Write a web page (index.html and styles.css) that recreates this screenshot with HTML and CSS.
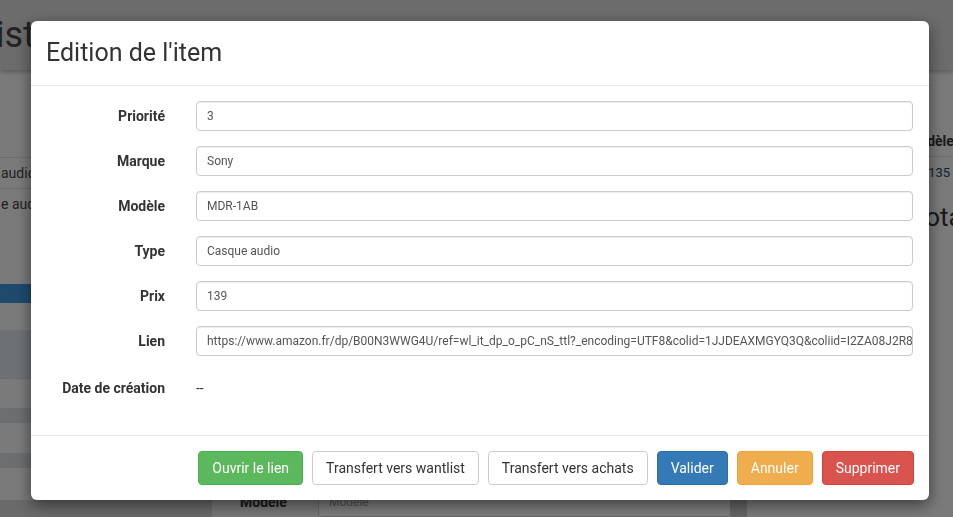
FILE: index.html
```html
<!DOCTYPE html>
<html lang="fr">
<head>
<meta charset="utf-8">
<title>Edition de l'item</title>
<link rel="stylesheet" href="styles.css">
</head>
<body>
<div class="page">
  <header class="navbar">
    <span class="brand">Wishlist</span>
  </header>
  <main class="content">
    <section class="col-left">
      <div class="left-top"></div>
      <div class="trow">audio</div>
      <div class="trow">e audio</div>
      <div class="left-gap"></div>
      <div class="blue-bar"></div>
      <div class="lite h27"></div>
      <div class="tint h48"></div>
      <div class="lite h30 bt"></div>
      <div class="strip"></div>
      <div class="lite h30"></div>
      <div class="strip"></div>
      <div class="lite h32"></div>
      <div class="left-foot"></div>
    </section>
    <section class="col-mid">
      <div class="mid-row">
        <span class="mid-label">Modèle</span>
        <span class="mid-input">Modèle</span>
      </div>
    </section>
    <div class="col-gap"></div>
    <section class="col-right">
      <div class="rt-head"><span class="rt-cell">Modèle</span></div>
      <div class="rt-row"><span class="rt-cell rt-val">XB135</span></div>
      <h3 class="rt-total">Total</h3>
    </section>
  </main>
</div>

<div class="backdrop"></div>

<div class="modal-layer">
  <div class="modal">
    <div class="modal-header">
      <h4 class="modal-title">Edition de l'item</h4>
    </div>
    <div class="modal-body">
      <div class="form-row">
        <label class="form-label">Priorité</label>
        <div class="form-input">3</div>
      </div>
      <div class="form-row">
        <label class="form-label">Marque</label>
        <div class="form-input">Sony</div>
      </div>
      <div class="form-row">
        <label class="form-label">Modèle</label>
        <div class="form-input">MDR-1AB</div>
      </div>
      <div class="form-row">
        <label class="form-label">Type</label>
        <div class="form-input">Casque audio</div>
      </div>
      <div class="form-row">
        <label class="form-label">Prix</label>
        <div class="form-input">139</div>
      </div>
      <div class="form-row">
        <label class="form-label">Lien</label>
        <div class="form-input">https://www.amazon.fr/dp/B00N3WWG4U/ref=wl_it_dp_o_pC_nS_ttl?_encoding=UTF8&amp;colid=1JJDEAXMGYQ3Q&amp;coliid=I2ZA08J2R8ZZZ</div>
      </div>
      <div class="form-row static">
        <label class="form-label">Date de création</label>
        <div class="form-static">--</div>
      </div>
    </div>
    <div class="modal-footer">
      <button class="btn btn-success">Ouvrir le lien</button>
      <button class="btn btn-default">Transfert vers wantlist</button>
      <button class="btn btn-default">Transfert vers achats</button>
      <button class="btn btn-primary">Valider</button>
      <button class="btn btn-warning">Annuler</button>
      <button class="btn btn-danger">Supprimer</button>
    </div>
  </div>
</div>
</body>
</html>
```

FILE: styles.css
```css
* { box-sizing: border-box; }

html, body {
  margin: 0;
  padding: 0;
  height: 100%;
  overflow: hidden;
}

body {
  font-family: Roboto, "Liberation Sans", sans-serif;
  font-size: 14px;
  color: #333;
  background: #f4f4f4;
}

/* ---------- page behind the modal ---------- */
.page {
  width: 953px;
  height: 517px;
  overflow: hidden;
}

.navbar {
  height: 70px;
  background: #d8d8d8;
  box-shadow: 0 2px 4px rgba(0, 0, 0, 0.25);
  display: flex;
  align-items: center;
  position: relative;
  z-index: 1;
}

.brand {
  font-size: 36px;
  color: #444;
  margin-left: -92px;
  line-height: 42px;
}

.content {
  display: grid;
  grid-template-columns: 212px 519px 16px 1fr;
  height: 447px;
}

.col-left {
  display: flex;
  flex-direction: column;
  background: #f4f4f4;
}

.left-top { height: 87px; }

.trow {
  height: 31px;
  border-top: 1px solid #dcdcdc;
  line-height: 30px;
  padding-left: 1px;
  color: #444;
}

.left-gap { height: 65px; }
.blue-bar { height: 19px; background: #3d94dc; }
.lite { background: #f4f4f4; }
.tint { background: #dbe2ea; }
.bt { border-top: 1px solid #d6d6d6; }
.h27 { height: 27px; }
.h48 { height: 48px; }
.h30 { height: 30px; }
.h32 { height: 32px; }
.strip { height: 15px; background: #d8dce0; }
.left-foot { flex: 1; background: #d4d4d4; }

.col-mid {
  background: #efefef;
  padding-top: 417px;
}

.mid-row {
  display: flex;
  align-items: center;
  height: 30px;
}

.mid-label {
  width: 106px;
  padding-left: 28px;
  font-weight: bold;
  color: #333;
}

.mid-input {
  flex: 1;
  height: 30px;
  line-height: 28px;
  border: 1px solid #ccc;
  border-radius: 4px;
  background: #fafafa;
  padding-left: 10px;
  font-size: 12px;
  color: #999;
}

.col-gap { background: #cacaca; }

.col-right {
  background: #f4f4f4;
  padding-top: 55px;
  padding-left: 159px;
}

.rt-head, .rt-row {
  height: 31px;
  display: flex;
  align-items: center;
}

.rt-head {
  font-weight: bold;
  border-bottom: 1px solid #ddd;
  height: 32px;
  padding-left: 1px;
}

.rt-row { padding-left: 6px; }

.rt-val { color: #2a4460; font-size: 13px; }

.rt-total {
  margin: 14px 0 0 5px;
  font-size: 26px;
  font-weight: normal;
  color: #333;
}

/* ---------- overlay ---------- */
.backdrop {
  position: fixed;
  inset: 0;
  background: rgba(0, 0, 0, 0.5);
  z-index: 10;
}

.modal-layer {
  position: fixed;
  inset: 0;
  z-index: 20;
}

.modal {
  width: 898px;
  margin: 21px 0 0 31px;
  background: #fff;
  border-radius: 6px;
  box-shadow: 0 5px 15px rgba(0, 0, 0, 0.5);
}

.modal-header {
  padding: 15px;
  border-bottom: 1px solid #e5e5e5;
}

.modal-title {
  margin: 0;
  font-size: 25px;
  line-height: 34px;
  font-weight: normal;
  color: #333;
}

.modal-body {
  padding: 15px 16px 30px 15px;
  display: flex;
  flex-direction: column;
  gap: 15px;
}

.form-row {
  display: grid;
  grid-template-columns: 119px 1fr;
  column-gap: 31px;
  align-items: center;
  height: 30px;
}

.form-row.static { height: 34px; }

.form-label {
  text-align: right;
  font-weight: bold;
  color: #333;
  white-space: nowrap;
}

.form-input {
  height: 30px;
  line-height: 28px;
  border: 1px solid #ccc;
  border-radius: 4px;
  box-shadow: inset 0 1px 1px rgba(0, 0, 0, 0.075);
  padding: 0 10px;
  font-size: 12px;
  color: #555;
  white-space: nowrap;
  overflow: hidden;
}

.form-static {
  color: #333;
}

.modal-footer {
  border-top: 1px solid #e5e5e5;
  padding: 15px;
  display: flex;
  justify-content: flex-end;
  gap: 9px;
}

.btn {
  font-family: inherit;
  font-size: 14px;
  height: 34px;
  padding: 0 13px;
  border: 1px solid transparent;
  border-radius: 4px;
  cursor: pointer;
  color: #fff;
}

.btn-default { background: #fff; border-color: #ccc; color: #333; }
.btn-success { background: #5cb85c; border-color: #4cae4c; }
.btn-primary { background: #337ab7; border-color: #2e6da4; }
.btn-warning { background: #f0ad4e; border-color: #eea236; }
.btn-danger  { background: #d9534f; border-color: #d43f3a; }
```
